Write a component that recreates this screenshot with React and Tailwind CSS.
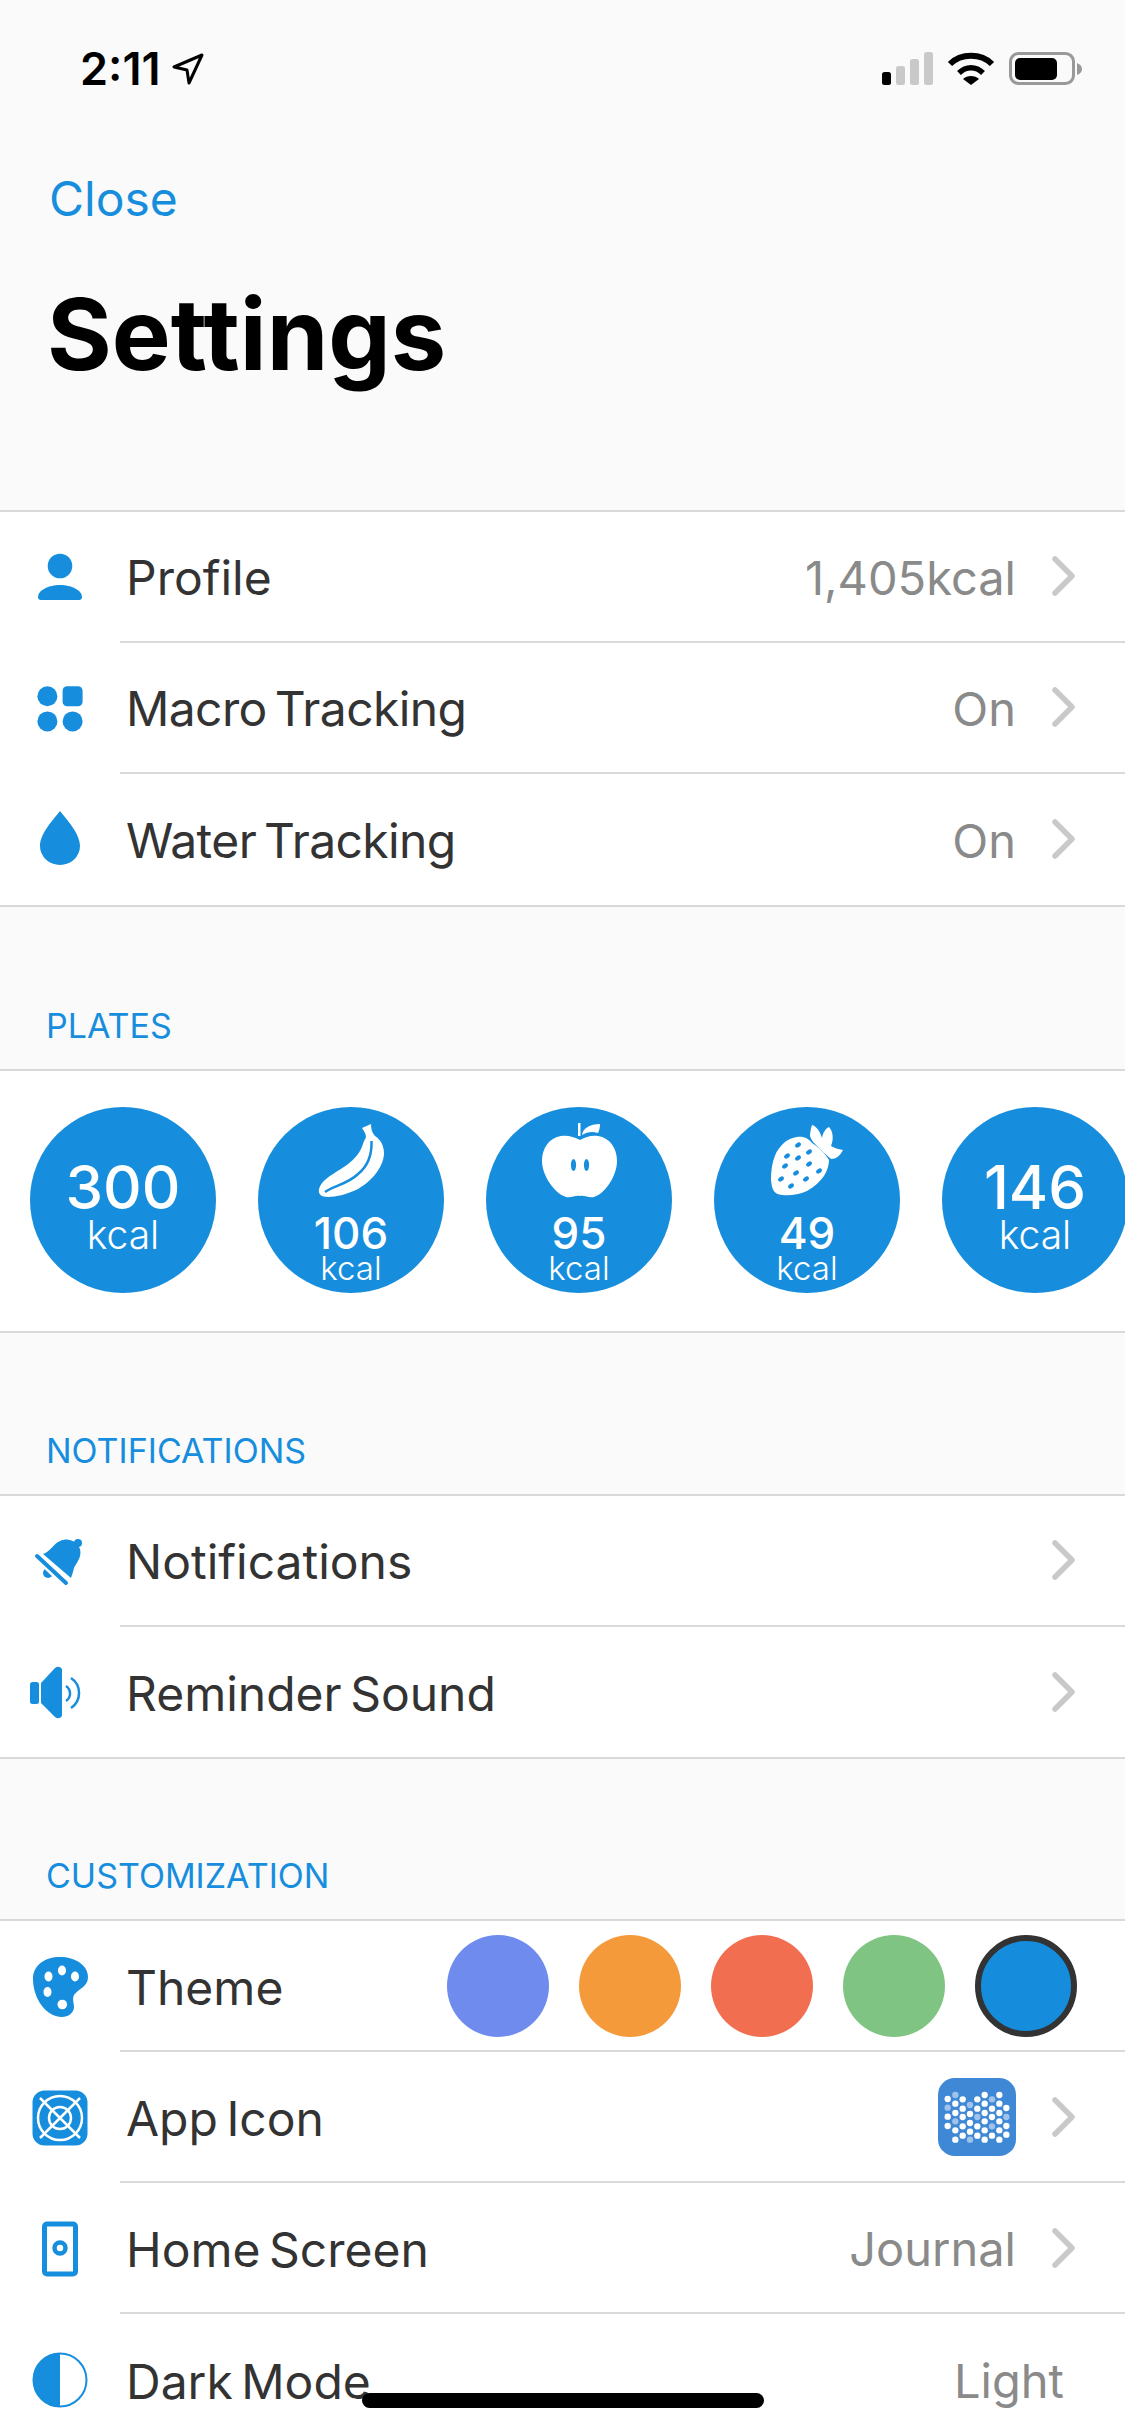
import React from "react";

const BLUE = "#178edd";

// status bar glyphs
const LocationArrow = () => (
  <svg width="32" height="32" viewBox="-1 -1 32 32" fill="none" stroke="#000" strokeWidth="3" strokeLinejoin="round">
    <path d="M29 1 L1 13 L14 16 L16 29 Z" />
  </svg>
);

const StatusIcons = () => (
  <svg width="200" height="33" viewBox="0 0 200 33">
    <rect x="0" y="20" width="9" height="13" rx="2.5" fill="#000" />
    <rect x="14" y="14" width="9" height="19" rx="2.5" fill="#c9c9c9" />
    <rect x="28" y="7" width="9" height="26" rx="2.5" fill="#c9c9c9" />
    <rect x="42" y="0" width="9" height="33" rx="2.5" fill="#c9c9c9" />
    <g transform="translate(66 0)">
      <path d="M2 12 C13 1 33 1 44 12" fill="none" stroke="#000" strokeWidth="6" />
      <path d="M11 21 C18 14 28 14 35 21" fill="none" stroke="#000" strokeWidth="5.5" />
      <path d="M15 27 C19 23 27 23 31 27 L23 33 Z" fill="#000" />
    </g>
    <rect x="128.5" y="1.5" width="63" height="30" rx="8" fill="none" stroke="#999" strokeWidth="3" />
    <rect x="133" y="6" width="42" height="22" rx="5" fill="#000" />
    <path d="M195 11 Q200 13 200 17 Q200 21 195 23 Z" fill="#999" />
  </svg>
);

// row icons, each drawn in a 60 box centred on the row's icon column
const Box = ({ children }) => (
  <svg width="60" height="60" viewBox="0 0 60 60" fill={BLUE}>{children}</svg>
);

const ProfileIcon = () => (
  <Box>
    <circle cx="30" cy="19" r="12.3" />
    <path d="M8 50 C8 43 19 38 30 38 C41 38 52 43 52 50 Q52 53 49 53 H11 Q8 53 8 50 Z" />
  </Box>
);
const MacroIcon = () => (
  <Box>
    <circle cx="17.4" cy="18.2" r="10" />
    <rect x="32.6" y="8.2" width="20" height="20" rx="4.5" />
    <circle cx="17.4" cy="43.4" r="10" />
    <circle cx="42.6" cy="43.4" r="10" />
  </Box>
);
const DropIcon = () => (
  <Box>
    <path d="M30 2 C24 10 10 24 10 37 A20 19 0 0 0 50 37 C50 24 36 10 30 2 Z" />
  </Box>
);
const BellIcon = () => (
  <Box>
    <circle cx="48" cy="12" r="4" />
    <circle cx="18" cy="42" r="5" />
    <path d="M13 23 C20 21 23 13 30 10 C38 6 47 10 50 18 C52 26 47 31 44 37 C43 41 42 44 41 47 Z" />
    <path d="M6 24 L37 53" stroke="#fff" strokeWidth="9" />
    <path d="M7 25 L36 52" stroke={BLUE} strokeWidth="4" strokeLinecap="round" />
  </Box>
);
const SpeakerIcon = () => (
  <Box>
    <rect x="0" y="20" width="9" height="22" rx="2.5" />
    <path d="M11 21 L25 6 Q29 3 32 7 V54 Q29 58 25 55 L11 41 Z" />
    <path d="M36 24 A9 9 0 0 1 36 39" fill="none" stroke={BLUE} strokeWidth="2.5" />
    <path d="M41 16 A18 18 0 0 1 41 46" fill="none" stroke={BLUE} strokeWidth="2.5" />
  </Box>
);
const PaletteIcon = () => (
  <Box>
    <path d="M3 22 C3 8 15 0 30 0 C45 0 58 8 58 20 C58 30 48 32 44 38 C42 42 44 46 44 50 C44 56 38 60 32 60 C15 60 3 40 3 22 Z" />
    <g fill="#fff">
      <ellipse cx="18.5" cy="19.5" rx="4" ry="5" />
      <ellipse cx="32" cy="13.5" rx="4" ry="5" />
      <ellipse cx="45" cy="19.5" rx="4" ry="5" />
      <ellipse cx="17.5" cy="35" rx="4" ry="5" />
      <circle cx="32.3" cy="47.5" r="4.8" />
    </g>
  </Box>
);
const AppIconIcon = () => (
  <Box>
    <rect x="2.5" y="2.5" width="55" height="55" rx="12" />
    <g fill="none" stroke="#fff" strokeWidth="2.5">
      <circle cx="30" cy="30" r="22" />
      <circle cx="30" cy="30" r="11" />
      <path d="M10 10 L50 50 M50 10 L10 50" />
    </g>
  </Box>
);
const PhoneIcon = () => (
  <Box>
    <rect x="14.5" y="5" width="31" height="50" rx="2.5" fill="#fff" stroke={BLUE} strokeWidth="5" />
    <circle cx="30" cy="29" r="5.5" fill="#fff" stroke={BLUE} strokeWidth="4.5" />
  </Box>
);
const HalfCircleIcon = () => (
  <Box>
    <circle cx="30" cy="30" r="26.5" fill="#fff" stroke={BLUE} strokeWidth="2" />
    <path d="M30 3 A27 27 0 0 0 30 57 Z" />
  </Box>
);

const Chevron = () => (
  <svg width="27" height="42" viewBox="0 0 27 42" fill="none" stroke="#c9c9c9" strokeWidth="5.5" strokeLinecap="round" strokeLinejoin="round">
    <path d="M5 4 L22 21 L5 38" />
  </svg>
);

// plate artwork
const Banana = () => (
  <svg width="66" height="73" viewBox="0 0 66 73">
    <path fill="#fff" d="M44 4 L53 0 C53 5 54 9 57 12 C63 16 66 22 66 30 C65 45 52 58 40 65 C30 70 18 73 10 73 C3 73 0 70 1 65 C3 58 10 53 18 48 C30 41 41 33 45 20 C46 16 48 14 48 13 C48 10 46 7 44 4 Z" />
    <path fill="none" stroke={BLUE} strokeWidth="2.5" d="M53.5 17 C54 30 50 42 40 50 C30 60 15 62 7 68" />
  </svg>
);
const Apple = () => (
  <svg width="75" height="75" viewBox="0 0 75 75">
    <path fill="#fff" d="M36 0 H38.5 V13 H36 Z" />
    <path fill="#fff" d="M40 12 C41 5 48 1 58 1 C58 5 57 8 56 10 C50 8 45 9 40 12 Z" />
    <path fill="#fff" d="M38 17 C32 14 26 12 19 13 C7 15 0 25 0 38 C0 52 12 70 24 74 C29 75 34 72 38 73 C42 72 47 75 52 74 C64 70 75 52 75 38 C75 25 68 15 56 13 C49 12 44 14 38 17 Z" />
    <ellipse cx="31.5" cy="42" rx="2.6" ry="6" fill={BLUE} />
    <ellipse cx="44.5" cy="42" rx="2.6" ry="6" fill={BLUE} />
  </svg>
);
const Strawberry = () => (
  <svg width="72" height="72" viewBox="0 0 72 72">
    <path fill="#fff" d="M26 13 C33 12 38 15 41 19 C47 23 54 29 58 36 C58 46 52 58 36 67 C27 71 18 72 11 71 C3 70 1 66 0 56 C0 42 3 29 10 22 C15 16 20 14 26 13 Z" />
    <path fill="#fff" d="M41 1 C45 2 49 7 51 14 C52 9 54 5 58 3 C62 7 63 15 60 22 C63 24 67 25 72 26 C69 32 65 35 60 35 C55 31 50 26 46 22 C43 19 40 16 39 12 C39 8 40 4 41 1 Z" />
    {[[27,21],[16,32],[38,28],[27,34],[14,42],[38,40],[48,47],[25,49],[10,55],[35,55],[20,62]].map(([cx, cy], i) => (
      <ellipse key={i} cx={cx} cy={cy} rx="3.2" ry="2.1" fill={BLUE} transform={`rotate(-35 ${cx} ${cy})`} />
    ))}
  </svg>
);

const dotColumns = [
  [326, [600, 653, 681], [626]],
  [349, [614, 642, 694, 722], [588, 667]],
  [371, [601, 629, 654, 682, 710], []],
  [393, [645, 672, 698], [618, 722]],
  [415, [601, 629, 682, 710], [654]],
  [437, [588, 614, 642, 667, 694, 722], []],
  [459, [629, 654, 710], [601, 682]],
  [481, [588, 614, 642, 667, 694, 722], []],
  [502, [627, 681, 707], [654]],
];

const AppIconPreview = () => (
  <svg width="78" height="78" viewBox="297 537 234 234">
    <rect x="297" y="537" width="234" height="234" rx="50" fill="#3f88d6" />
    {dotColumns.map(([x, solid, faded]) => (
      <g key={x}>
        {solid.map((y) => <circle key={y} cx={x} cy={y} r="9.5" fill="#fff" />)}
        {faded.map((y) => <circle key={y} cx={x} cy={y} r="9.5" fill="#9fc3ea" />)}
      </g>
    ))}
  </svg>
);

const Row = ({ icon, label, value, last, children, noChevron, tight }) => (
  <div className="flex h-[130.9px] bg-white">
    <div className="w-[120px] flex items-center justify-center shrink-0">{icon}</div>
    <div className={`flex-1 flex items-center pl-[6px] pr-[48px] ${last ? "" : "border-b-2 border-[#d9d9d9]"}`}>
      <span className={`pt-[4px] text-[48px] [word-spacing:-5px] text-[#333333] whitespace-nowrap ${tight ? "tracking-[-0.6px]" : ""}`}>{label}</span>
      <div className="ml-auto flex items-center">
        {value && <span className="pt-[4px] text-[47px] text-[#8a8a8a] whitespace-nowrap">{value}</span>}
        {children}
        {!noChevron && <span className="ml-[34px] flex"><Chevron /></span>}
      </div>
    </div>
  </div>
);

const Group = ({ children, open }) => (
  <div className={`border-t-2 border-[#d9d9d9] ${open ? "" : "border-b-2"}`}>{children}</div>
);

const SectionTitle = ({ children, height }) => (
  <div className={`${height} flex items-end pl-[46px] pb-[18px]`}>
    <span className="text-[34px] leading-[50px] text-[#178edd]">{children}</span>
  </div>
);

const Plate = ({ art, value, big }) => (
  <div className="w-[186px] h-[186px] rounded-full bg-[#178edd] shrink-0 flex flex-col items-center text-white">
    {big ? (
      <>
        <span className="mt-[44px] text-[60px] leading-[72px] font-medium">{value}</span>
        <span className="-mt-[6px] text-[39px] leading-[36px] font-light">kcal</span>
      </>
    ) : (
      <>
        <span className="mt-[16px] flex h-[75px] items-center">{art}</span>
        <span className="mt-[13px] text-[44px] leading-[44px] font-medium">{value}</span>
        <span className="text-[33px] leading-[26px] font-light">kcal</span>
      </>
    )}
  </div>
);

const swatches = ["bg-[#6f8bee]", "bg-[#f59a3b]", "bg-[#f26e50]", "bg-[#80c483]"];

export default function App() {
  return (
    <div className="relative w-[1125px] h-[2436px] overflow-hidden bg-[#fafafa] font-['Inter',sans-serif]">
      <div className="h-[510px]">
        <div className="flex justify-between pt-[50px] pl-[80px] pr-[43px]">
          <div className="flex items-center gap-[12px]">
            <span className="text-[45px] leading-[38px] font-semibold text-black">2:11</span>
            <LocationArrow />
          </div>
          <div className="pt-[2px]"><StatusIcons /></div>
        </div>
        <div className="pl-[49px] pt-[81px] text-[48px] leading-[60px] text-[#178edd]">Close</div>
        <h1 className="pl-[47px] pt-[45px] text-[99px] leading-[120px] font-bold text-black">Settings</h1>
      </div>

      <Group>
        <Row icon={<ProfileIcon />} label="Profile" value="1,405kcal" />
        <Row icon={<MacroIcon />} label="Macro Tracking" value="On" tight />
        <Row icon={<DropIcon />} label="Water Tracking" value="On" tight last />
      </Group>

      <SectionTitle height="h-[162px]">PLATES</SectionTitle>
      <Group>
        <div className="h-[260px] bg-white flex items-center gap-[42px] pl-[30px] pb-[2px]">
          <Plate big value="300" />
          <Plate art={<Banana />} value="106" />
          <Plate art={<Apple />} value="95" />
          <Plate art={<Strawberry />} value="49" />
          <Plate big value="146" />
        </div>
      </Group>

      <SectionTitle height="h-[161px]">NOTIFICATIONS</SectionTitle>
      <Group>
        <Row icon={<BellIcon />} label="Notifications" />
        <Row icon={<SpeakerIcon />} label="Reminder Sound" last />
      </Group>

      <SectionTitle height="h-[160px]">CUSTOMIZATION</SectionTitle>
      <Group open>
        <Row icon={<PaletteIcon />} label="Theme" noChevron>
          <div className="flex gap-[30px]">
            {swatches.map((c) => <div key={c} className={`w-[102px] h-[102px] rounded-full ${c}`} />)}
            <div className="w-[102px] h-[102px] rounded-full bg-[#158cdc] border-[6px] border-[#333333]" />
          </div>
        </Row>
        <Row icon={<AppIconIcon />} label="App Icon"><AppIconPreview /></Row>
        <Row icon={<PhoneIcon />} label="Home Screen" value="Journal" />
        <Row icon={<HalfCircleIcon />} label="Dark Mode" last noChevron>
          <span className="pt-[4px] mr-[13px] text-[47px] text-[#8a8a8a] whitespace-nowrap">Light</span>
        </Row>
      </Group>

      <div className="absolute left-[362px] top-[2393px] w-[402px] h-[15px] rounded-full bg-black" />
    </div>
  );
}
